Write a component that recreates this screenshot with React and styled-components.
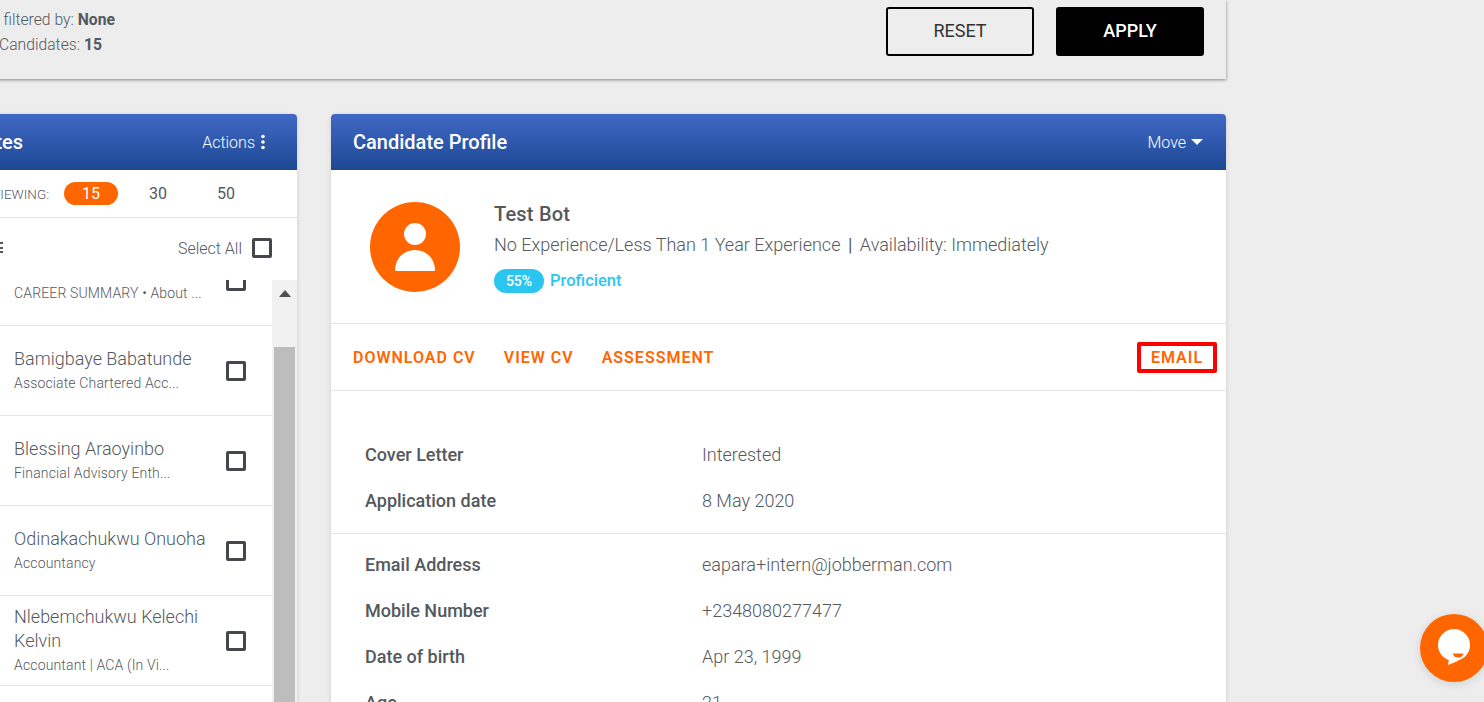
import React from "react";
import styled, { createGlobalStyle } from "styled-components";

const GlobalStyle = createGlobalStyle`
  html, body { margin: 0; padding: 0; overflow: hidden; background: #ededed; }
  body { font-family: Roboto, "Liberation Sans", sans-serif; color: #54595e; }
`;

const Viewport = styled.div`
  position: relative;
  width: 1484px;
  height: 702px;
  overflow: hidden;
`;

const Page = styled.div`
  width: 1326px;
  margin-left: -100px;
`;

const FilterBar = styled.div`
  height: 79px;
  box-sizing: border-box;
  display: flex;
  align-items: flex-start;
  justify-content: space-between;
  padding: 7px 22px 0 0;
  background: #ededed;
  box-shadow: 0 1px 3px rgba(0, 0, 0, 0.45);
`;

const FilterInfo = styled.div`
  font-size: 15.7px;
  line-height: 25px;
  font-weight: 300;
  margin-left: 5px;
`;

const FilterLine = styled.div`
  display: flex;
  justify-content: flex-end;
  white-space: nowrap;
  width: ${(p) => p.$width}px;
  b { font-weight: 700; margin-left: 4px; }
`;

const Buttons = styled.div`
  display: flex;
  gap: 22px;
`;

const Button = styled.button`
  width: 148px;
  height: 49px;
  padding: 0 0 2px;
  border-radius: 3px;
  border: 2px solid #000;
  font-family: inherit;
  font-size: 18px;
  background: ${(p) => (p.$solid ? "#000" : "transparent")};
  color: ${(p) => (p.$solid ? "#fff" : "#333")};
  font-weight: ${(p) => (p.$solid ? 500 : 400)};
`;

const Columns = styled.div`
  display: flex;
  gap: 34px;
  margin-top: 35px;
  align-items: flex-start;
`;

const Panel = styled.section`
  width: ${(p) => p.$width}px;
  flex: none;
  background: #fff;
  border-radius: 4px 4px 0 0;
  box-shadow: 0 1px 4px rgba(0, 0, 0, 0.15);
`;

const PanelHeader = styled.header`
  height: 56px;
  box-sizing: border-box;
  display: flex;
  align-items: center;
  justify-content: space-between;
  padding: 0 ${(p) => p.$right}px 0 22px;
  color: #fff;
  border-radius: 4px 4px 0 0;
  background: linear-gradient(180deg, #4168c6 0%, #1c4892 100%);
`;

const PanelTitle = styled.h2`
  margin: 0;
  font-size: 20px;
  font-weight: 500;
`;

const HeaderAction = styled.div`
  display: flex;
  align-items: center;
  gap: 5px;
  font-size: 16px;
  font-weight: 300;
`;

const ViewingRow = styled.div`
  height: 47px;
  display: flex;
  align-items: center;
  padding-left: 92px;
  border-bottom: 1px solid #e3e5e8;
  font-size: 13.5px;
  font-weight: 300;
`;

const ViewingLabel = styled.span`
  width: 72px;
  flex: none;
`;

const PageSize = styled.span`
  width: ${(p) => (p.$wide ? 82 : 54)}px;
  height: 23px;
  line-height: 23px;
  flex: none;
  text-align: center;
  border-radius: 12px;
  font-size: 16px;
  font-weight: 400;
  color: ${(p) => (p.$active ? "#fff" : "#54595e")};
  background: ${(p) => (p.$active ? "#ff6600" : "transparent")};
  margin-right: ${(p) => (p.$active ? 13 : 0)}px;
`;

const SelectRow = styled.div`
  height: 62px;
  box-sizing: border-box;
  display: flex;
  align-items: center;
  justify-content: space-between;
  padding: 0 25px 2px 0;
  font-size: 16px;
  font-weight: 300;
`;

const SortBars = styled.span`
  display: block;
  width: 103px;
  height: 11px;
  margin-bottom: 1px;
  background: repeating-linear-gradient(180deg, #54595e 0 2px, transparent 2px 4.5px);
  clip-path: inset(0 0 0 93px);
`;

const SelectAll = styled.div`
  display: flex;
  align-items: center;
  gap: 10px;
`;

const Checkbox = styled.span`
  display: block;
  flex: none;
  width: 14px;
  height: 14px;
  border: 3px solid #44484c;
  border-radius: 2px;
`;

const ListArea = styled.div`
  display: flex;
  height: 422px;
  overflow: hidden;
`;

const List = styled.div`
  flex: 1;
  margin-top: -44px;
`;

const Row = styled.div`
  height: 89px;
  display: flex;
  align-items: center;
  justify-content: space-between;
  padding: 0 26px 0 114px;
  border-bottom: 1px solid #e3e5e8;
`;

const RowText = styled.div`
  width: 195px;
`;

const RowName = styled.div`
  font-size: 18px;
  line-height: 24px;
  font-weight: 300;
`;

const RowSub = styled.div`
  font-size: 14px;
  line-height: 24px;
  font-weight: 300;
  letter-spacing: 0.15px;
  white-space: nowrap;
`;

const Scrollbar = styled.div`
  width: 25px;
  flex: none;
  box-sizing: border-box;
  padding: 0 2px;
  background: #f1f1f1;
`;

const ScrollUp = styled.div`
  height: 67px;
  display: flex;
  justify-content: center;
  padding-top: 10px;
  box-sizing: border-box;
  svg { display: block; }
`;

const ScrollThumb = styled.div`
  height: 355px;
  background: #bdbdbd;
`;

const ProfileTop = styled.div`
  height: 154px;
  box-sizing: border-box;
  display: flex;
  align-items: flex-start;
  padding: 32px 0 0 39px;
  gap: 34px;
  border-bottom: 1px solid #e3e5e8;
`;

const Avatar = styled.div`
  width: 90px;
  height: 90px;
  flex: none;
`;

const ProfileName = styled.div`
  font-size: 20px;
  line-height: 24px;
  font-weight: 500;
  letter-spacing: 0.2px;
`;

const ProfileMeta = styled.div`
  font-size: 18px;
  line-height: 24px;
  margin-top: 7px;
  font-weight: 300;
  span { margin: 0 7.5px; font-weight: 400; }
`;

const Skill = styled.div`
  display: flex;
  align-items: center;
  gap: 6px;
  margin-top: 12px;
  font-size: 16.5px;
  font-weight: 500;
  color: #2ac6f0;
`;

const SkillBadge = styled.span`
  width: 50px;
  height: 24px;
  line-height: 24px;
  text-align: center;
  border-radius: 12px;
  font-size: 14px;
  color: #fff;
  background: #2ac6f0;
`;

const SkillLabel = styled.span`
  margin-bottom: 2px;
`;

const ActionBar = styled.div`
  height: 67px;
  box-sizing: border-box;
  display: flex;
  align-items: center;
  gap: 28px;
  padding: 0 9px 0 22px;
  border-bottom: 1px solid #e3e5e8;
`;

const ActionLink = styled.a`
  font-size: 16px;
  font-weight: 600;
  letter-spacing: 1px;
  color: #ff6600;
`;

const EmailLink = styled(ActionLink)`
  margin-left: auto;
  width: 80px;
  height: 31px;
  box-sizing: border-box;
  line-height: 24px;
  text-align: center;
  border: 4px solid #ff0000;
  border-radius: 2px;
`;

const DetailGroup = styled.div`
  padding: ${(p) => p.$top}px 0 ${(p) => p.$bottom}px 34px;
  border-bottom: ${(p) => (p.$divided ? "1px solid #e3e5e8" : "none")};
`;

const DetailRow = styled.div`
  height: 46px;
  display: flex;
  align-items: center;
  font-size: 18px;
`;

const DetailLabel = styled.div`
  width: 337px;
  font-weight: 500;
`;

const DetailValue = styled.div`
  font-weight: 300;
`;

const ChatBubble = styled.div`
  position: absolute;
  left: 1420px;
  top: 614px;
  width: 68px;
  height: 68px;
  border-radius: 50%;
  background: #ff6600;
  box-shadow: 0 2px 10px rgba(0, 0, 0, 0.12);
`;

const candidates = [
  { name: "Adaeze Okafor", sub: "CAREER SUMMARY • About ..." },
  { name: "Bamigbaye Babatunde", sub: "Associate Chartered Acc..." },
  { name: "Blessing Araoyinbo", sub: "Financial Advisory Enth..." },
  { name: "Odinakachukwu Onuoha", sub: "Accountancy" },
  { name: "Nlebemchukwu Kelechi Kelvin", sub: "Accountant | ACA (In Vi..." },
  { name: "Chidera Nwosu", sub: "Accountant" },
];

const App = () => {
  return (
    <Viewport>
      <GlobalStyle />
      <Page>
        <FilterBar>
          <FilterInfo>
            <FilterLine $width={210}>Results filtered by:<b>None</b></FilterLine>
            <FilterLine $width={197}>Total Candidates:<b>15</b></FilterLine>
          </FilterInfo>
          <Buttons>
            <Button>RESET</Button>
            <Button $solid>APPLY</Button>
          </Buttons>
        </FilterBar>
        <Columns>
          <Panel $width={397}>
            <PanelHeader $right={31}>
              <PanelTitle>Candidates</PanelTitle>
              <HeaderAction>
                Actions
                <svg width="6" height="16" viewBox="0 0 6 16" fill="#fff">
                  <circle cx="3" cy="2.5" r="1.8" />
                  <circle cx="3" cy="8" r="1.8" />
                  <circle cx="3" cy="13.5" r="1.8" />
                </svg>
              </HeaderAction>
            </PanelHeader>
            <ViewingRow>
              <ViewingLabel>VIEWING:</ViewingLabel>
              <PageSize $active>15</PageSize>
              <PageSize>30</PageSize>
              <PageSize $wide>50</PageSize>
            </ViewingRow>
            <SelectRow>
              <SortBars />
              <SelectAll>
                Select All
                <Checkbox />
              </SelectAll>
            </SelectRow>
            <ListArea>
              <List>
                {candidates.map((c) => (
                  <Row key={c.name}>
                    <RowText>
                      <RowName>{c.name}</RowName>
                      <RowSub>{c.sub}</RowSub>
                    </RowText>
                    <Checkbox />
                  </Row>
                ))}
              </List>
              <Scrollbar>
                <ScrollUp>
                  <svg width="12" height="7" viewBox="0 0 12 7" fill="#505050">
                    <path d="M6 0l6 7H0z" />
                  </svg>
                </ScrollUp>
                <ScrollThumb />
              </Scrollbar>
            </ListArea>
          </Panel>
          <Panel $width={895}>
            <PanelHeader $right={23}>
              <PanelTitle>Candidate Profile</PanelTitle>
              <HeaderAction>
                Move
                <svg width="12" height="6" viewBox="0 0 12 6" fill="#fff">
                  <path d="M0 0h12L6 6z" />
                </svg>
              </HeaderAction>
            </PanelHeader>
            <ProfileTop>
              <Avatar>
                <svg width="90" height="90" viewBox="0 0 90 90">
                  <circle cx="45" cy="45" r="45" fill="#ff6600" />
                  <circle cx="45" cy="32" r="11" fill="#fff" />
                  <path d="M25 69c0-13 9-21 20-21s20 8 20 21z" fill="#fff" />
                </svg>
              </Avatar>
              <div>
                <ProfileName>Test Bot</ProfileName>
                <ProfileMeta>
                  No Experience/Less Than 1 Year Experience<span>|</span>Availability: Immediately
                </ProfileMeta>
                <Skill>
                  <SkillBadge>55%</SkillBadge>
                  <SkillLabel>Proficient</SkillLabel>
                </Skill>
              </div>
            </ProfileTop>
            <ActionBar>
              <ActionLink>DOWNLOAD CV</ActionLink>
              <ActionLink>VIEW CV</ActionLink>
              <ActionLink>ASSESSMENT</ActionLink>
              <EmailLink>EMAIL</EmailLink>
            </ActionBar>
            <DetailGroup $top={40} $bottom={10} $divided>
              <DetailRow>
                <DetailLabel>Cover Letter</DetailLabel>
                <DetailValue>Interested</DetailValue>
              </DetailRow>
              <DetailRow>
                <DetailLabel>Application date</DetailLabel>
                <DetailValue>8 May 2020</DetailValue>
              </DetailRow>
            </DetailGroup>
            <DetailGroup $top={7} $bottom={0}>
              <DetailRow>
                <DetailLabel>Email Address</DetailLabel>
                <DetailValue>eapara+intern@jobberman.com</DetailValue>
              </DetailRow>
              <DetailRow>
                <DetailLabel>Mobile Number</DetailLabel>
                <DetailValue>+2348080277477</DetailValue>
              </DetailRow>
              <DetailRow>
                <DetailLabel>Date of birth</DetailLabel>
                <DetailValue>Apr 23, 1999</DetailValue>
              </DetailRow>
              <DetailRow>
                <DetailLabel>Age</DetailLabel>
                <DetailValue>21</DetailValue>
              </DetailRow>
            </DetailGroup>
          </Panel>
        </Columns>
      </Page>
      <ChatBubble>
        <svg width="68" height="68" viewBox="0 0 68 68">
          <circle cx="34" cy="31" r="16" fill="#fff" />
          <path d="M29 45l9 2-10 4z" fill="#fff" />
          <path d="M32.700 39.500h10.800c-1 3-3 4-5.400 4s-4.400-1-5.400-4z" fill="#ff6600" />
        </svg>
      </ChatBubble>
    </Viewport>
  );
};

export default App;
